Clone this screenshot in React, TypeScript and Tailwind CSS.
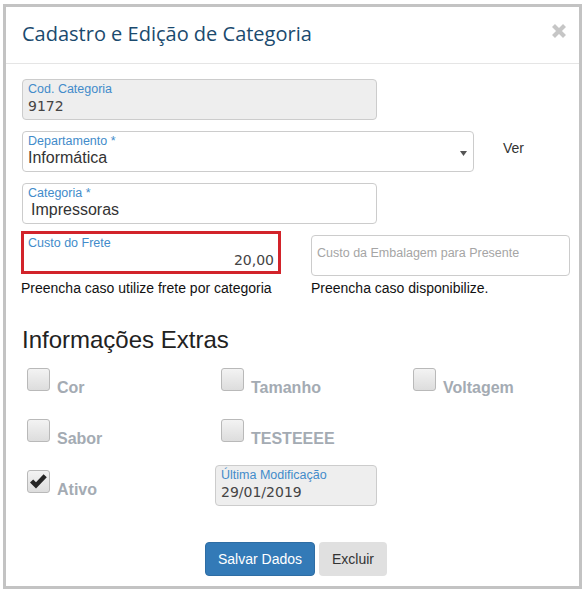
import React from "react";

function Field({
  label,
  value,
  className,
  disabled,
  children,
}: {
  label: string;
  value?: string;
  className?: string;
  disabled?: boolean;
  children?: React.ReactNode;
}) {
  return (
    <div
      className={`relative flex flex-col border border-[#cccccc] rounded-[4px] h-[41px] px-[5px] pt-[2px] ${
        disabled ? "bg-[#eeeeee]" : "bg-white"
      } ${className ?? ""}`}
    >
      <span className="text-[12.5px] leading-[15px] text-[#428bca]">{label}</span>
      {children ?? (
        <span className="text-[14px] leading-[18px] text-[#444] font-['DejaVu_Sans',Verdana,sans-serif]">
          {value}
        </span>
      )}
    </div>
  );
}

function Check({ label, checked }: { label: string; checked?: boolean }) {
  return (
    <div className="flex items-end gap-[7px]">
      <div className="w-[23px] h-[23px] rounded-[3px] border border-[#b9b9b9] bg-gradient-to-b from-[#f3f3f3] to-[#dddddd] flex items-center justify-center">
        {checked && (
          <svg width="19" height="17" viewBox="0 0 19 17">
            <path d="M1 9.6 L4.2 6.5 L7 9.3 L14.6 1.2 L17.8 4.3 L7 15.6 Z" fill="#262626" />
          </svg>
        )}
      </div>
      <span className="text-[16px] font-bold leading-none text-[#a4abb3] translate-y-[5px]">{label}</span>
    </div>
  );
}

export default function App() {
  return (
    <div className="w-[582px] h-[589px] bg-white pt-[4px] pl-[3px] font-['Liberation_Sans',Arial,sans-serif]">
      <div className="h-full border-[3px] border-[#c3c3c3] flex flex-col">
        {/* Header */}
        <div className="h-[57px] border-b border-[#e5e5e5] flex items-center justify-between pl-[16px] pr-[12px]">
          <h1 className="text-[20px] text-[#1b4a6e] font-['Open_Sans',sans-serif] translate-y-[-1px]">
            Cadastro e Edição de Categoria
          </h1>
          <svg width="16" height="16" viewBox="0 0 16 16" className="mt-[-8px]">
            <path d="M2.5 2.5 L13.5 13.5 M13.5 2.5 L2.5 13.5" stroke="#c6c6c6" strokeWidth="4.2" />
          </svg>
        </div>

        {/* Body */}
        <div className="flex flex-col pl-[16px]">
          <Field label="Cod. Categoria" value="9172" disabled className="mt-[15px] w-[355px]" />

          <div className="flex items-center mt-[11px]">
            <Field label="Departamento *" className="w-[452px]">
              <span className="text-[16px] leading-[18px] text-[#333]">Informática</span>
              <svg width="7" height="5" viewBox="0 0 7 5" className="absolute right-[6px] top-[19px]">
                <path d="M0 0 H7 L3.5 5 Z" fill="#555" />
              </svg>
            </Field>
            <span className="ml-[29px] text-[14px] text-[#333] -translate-y-[3px]">Ver</span>
          </div>

          <Field label="Categoria *" className="mt-[11px] w-[355px]">
            <span className="text-[16px] leading-[18px] text-[#333] pl-[3px]">Impressoras</span>
          </Field>

          <div className="flex items-start mt-[7px] ml-[-1px]">
            <div className="w-[260px] h-[43px] border-[3px] border-[#d2232a] flex flex-col px-[4px] pt-[2px]">
              <span className="text-[12.5px] leading-[15px] text-[#428bca]">Custo do Frete</span>
              <span className="text-[14px] leading-[18px] text-[#444] text-right font-['DejaVu_Sans',Verdana,sans-serif]">
                20,00
              </span>
            </div>
            <div className="ml-[30px] mt-[4px] w-[259px] h-[41px] border border-[#cccccc] rounded-[4px] flex items-center px-[5px]">
              <span className="text-[12.5px] text-[#a5a5a5] -translate-y-[2px]">
                Custo da Embalagem para Presente
              </span>
            </div>
          </div>

          <div className="flex mt-[4px] ml-[-1px] text-[14px] leading-[16px] text-[#111]">
            <span className="w-[290px]">Preencha caso utilize frete por categoria</span>
            <span>Preencha caso disponibilize.</span>
          </div>

          <h2 className="mt-[30px] text-[24px] leading-[28px] text-[#222]">Informações Extras</h2>

          {/* Checkboxes */}
          <div className="flex flex-col pl-[5px] mt-[14px]">
            <div className="flex h-[51px]">
              <div className="w-[194px]"><Check label="Cor" /></div>
              <div className="w-[192px]"><Check label="Tamanho" /></div>
              <div><Check label="Voltagem" /></div>
            </div>
            <div className="flex h-[46px]">
              <div className="w-[194px]"><Check label="Sabor" /></div>
              <div><Check label="TESTEEEE" /></div>
            </div>
            <div className="flex items-start">
              <div className="w-[188px] pt-[5px]"><Check label="Ativo" checked /></div>
              <Field label="Última Modificação" value="29/01/2019" disabled className="w-[162px]" />
            </div>
          </div>

          <div className="flex justify-center gap-[4px] mt-[36px] pr-[9px]">
            <button className="h-[34px] w-[110px] rounded-[4px] bg-[#337ab7] border border-[#2e6da4] text-white text-[14px]">
              Salvar Dados
            </button>
            <button className="h-[34px] w-[68px] rounded-[4px] bg-[#e0e0e0] text-[#333] text-[14px]">
              Excluir
            </button>
          </div>
        </div>
      </div>
    </div>
  );
}
